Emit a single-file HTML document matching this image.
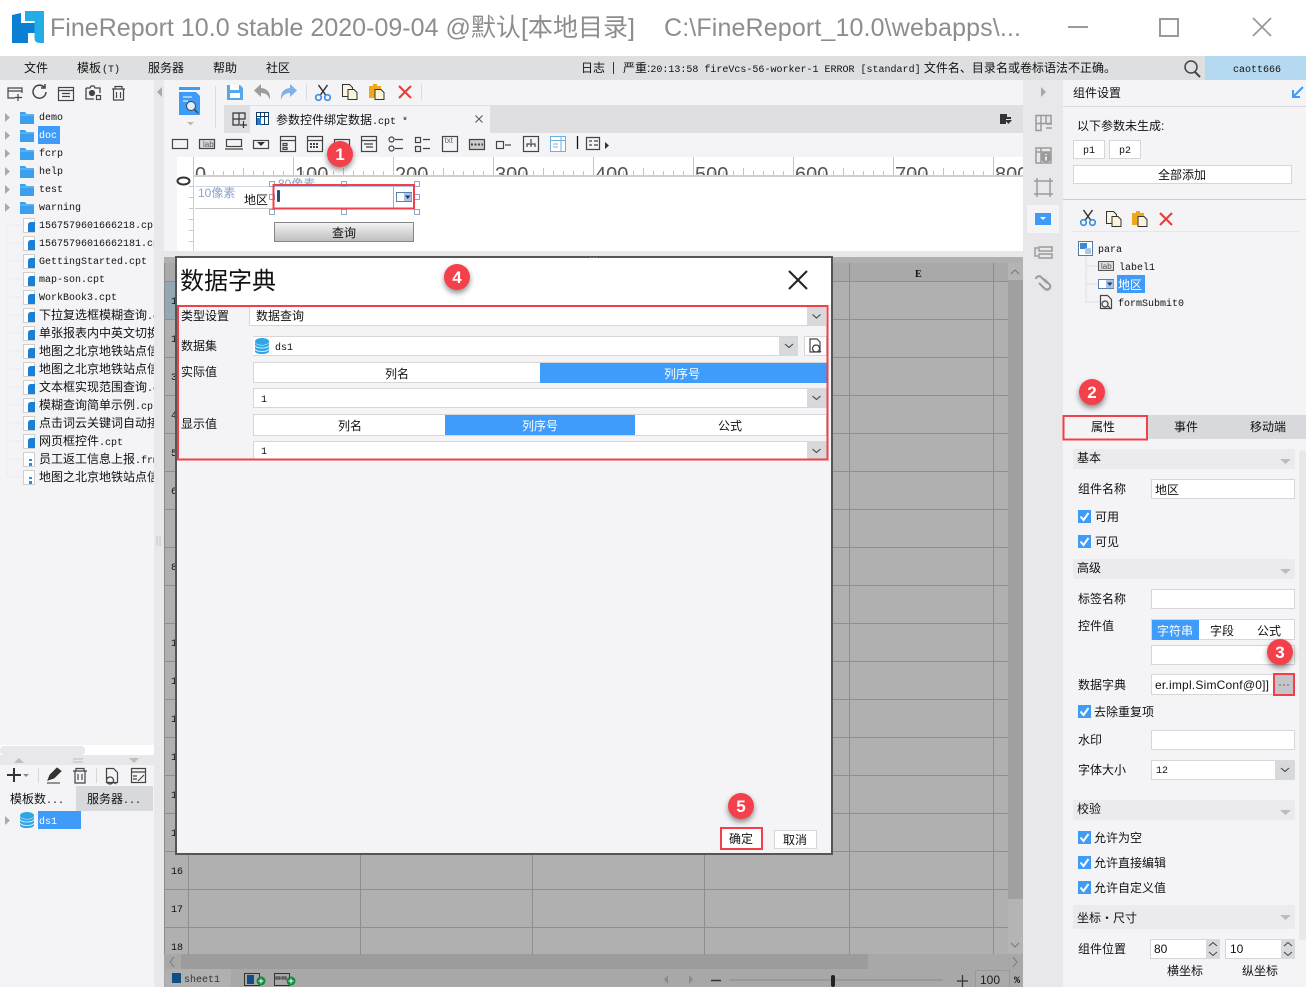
<!DOCTYPE html>
<html lang="zh"><head><meta charset="utf-8"><title>FineReport</title>
<style>
html,body{margin:0;padding:0;background:#f4f4f7;overflow:hidden}
svg{display:block}
text{font-family:"Liberation Sans","Noto Sans CJK SC",sans-serif;font-size:12px;fill:#111}
.m,.m text{font-family:"Liberation Mono","Noto Sans CJK SC",monospace;font-size:10px}
.w{fill:#fff}
.mid{text-anchor:middle}
.b{font-weight:bold;font-size:17px;fill:#fff;text-anchor:middle}
.ttl{font-size:25px;fill:#8d8d8d}
.rl{font-size:20px;fill:#555}
.fd{fill:#fff;stroke:#d6d6d8;stroke-width:1}
.ln{fill:none;stroke:#444;stroke-width:1.2}
.gy{fill:none;stroke:#9a9a9a;stroke-width:1.5}
.red{fill:none;stroke:#f2404a;stroke-width:2}
</style></head><body>
<svg width="1306" height="987" viewBox="0 0 1306 987" xmlns="http://www.w3.org/2000/svg">
<defs>
<clipPath id="cl"><rect x="0" y="108" width="154" height="640"/></clipPath>
<clipPath id="cr"><rect x="164" y="157" width="859" height="18"/></clipPath>
<pattern id="tk" width="10" height="18" x="193" y="157" patternUnits="userSpaceOnUse"><rect x="0" y="14" width="1" height="4" fill="#c4c4c4"/></pattern>
<g id="fo"><path d="M0 1h5l1.500 2H14v10H0z" fill="#3a9fee"/><path d="M0 4h14" stroke="#8cc8f6" stroke-width=".8"/></g>
<g id="fi"><path d="M.5 .5h11v14H.5z" fill="#fff" stroke="#cfcfcf"/><path d="M5 14V7q0-3 3-3h4v10z" fill="#1a7fd6"/></g>
<g id="fj"><path d="M.5 .5h11v14H.5z" fill="#fff" stroke="#cfcfcf"/><path d="M6 7h3v2H6zM6 11h3v3H6z" fill="#2a8ddd"/></g>
<g id="db"><ellipse cx="7" cy="3.500" rx="7" ry="3.500" fill="#2fa5e6"/><path d="M0 4v9c0 2 3 3 7 3s7-1 7-3V4c0 2-3 3.500-7 3.500S0 6 0 4z" fill="#2fa5e6"/><path d="M0 7.500c1 2 4 2.500 7 2.500s6-.5 7-2.500M0 11c1 2 4 2.500 7 2.500s6-.5 7-2.500" fill="none" stroke="#cfeafa"/></g>
<g id="cut"><path d="M3.500 0l7.500 10.500M12.500 0L5 10.500" stroke="#333" stroke-width="1.500" fill="none"/><circle cx="3.500" cy="12.500" r="2.800" fill="none" stroke="#3a8fe0" stroke-width="1.700"/><circle cx="12.500" cy="12.500" r="2.800" fill="none" stroke="#3a8fe0" stroke-width="1.700"/></g>
<g id="cp"><path d="M.5 .5h7l3 3v9H.5z" fill="#fbf6e4" stroke="#333"/><path d="M6 5.500h6l3 3v7H6z" fill="#fbf3dc" stroke="#333"/></g>
<g id="pa"><path d="M0 2h4V0h4v2h4v12H0z" fill="#f0a818"/><path d="M6 5.500h6l3 3v7H6z" fill="#fbf3dc" stroke="#333"/></g>
<path id="rx" d="M1 1l12 12M13 1L1 13" stroke="#e8413a" stroke-width="2.200" fill="none"/>
<g id="ck"><rect width="13" height="13" fill="#3f9bf8"/><path d="M2.500 6.500l3 3.500 5-7" fill="none" stroke="#fff" stroke-width="2"/></g>
<path id="chev" d="M0 0l4 3.500L8 0" fill="none" stroke="#444" stroke-width="1.100"/>
<g id="dd"><rect width="19" height="19" fill="#d8d9dc"/><use href="#chev" x="5.500" y="8"/></g>
<path id="sec" d="M0 0h11l-5.500 5z" fill="#bdbdbd"/>
<path id="ar" d="M0 0l5 4.500L0 9z" fill="#a9a9ab"/>
<g id="cb"><rect x=".5" y=".5" width="15" height="9" fill="#fff" stroke="#5d7fb0"/><rect x="8" y="1" width="7.500" height="8" fill="#a9c4e6"/><path d="M9 3.500h5.500L11.700 7z" fill="#1d3b66"/></g>
</defs>

<!-- title bar -->
<rect width="1306" height="56" fill="#fff"/>
<g>
<path d="M12 15l9-2v30h-9z" fill="#0b7fd4"/>
<path d="M21 23h13.500v10H28v10h-7z" fill="#0b7fd4"/>
<path d="M25 11h19v32h-4q-5.500 0-5.500-5V21H25z" fill="#22ade6"/>
</g>
<text class="ttl" x="50" y="36" textLength="585">FineReport 10.0 stable 2020-09-04 @默认[本地目录]</text>
<text class="ttl" x="664" y="36" textLength="357">C:\FineReport_10.0\webapps\...</text>
<path d="M1068 27h20" stroke="#9a9a9a" stroke-width="2"/>
<rect x="1160" y="19" width="18" height="17" fill="none" stroke="#9a9a9a" stroke-width="2"/>
<path d="M1253 18l18 18M1271 18l-18 18" stroke="#9a9a9a" stroke-width="1.800"/>

<!-- menu -->
<rect y="56" width="1306" height="24" fill="#dedfe1"/>
<text x="24" y="72">文件</text>
<text x="77" y="72">模板<tspan class="m" dx="1">(T)</tspan></text>
<text x="148" y="72">服务器</text>
<text x="213" y="72">帮助</text>
<text x="266" y="72">社区</text>
<text x="581" y="72">日志</text>
<path d="M613.500 62v12" stroke="#333"/>
<text x="623" y="72" textLength="493">严重:<tspan class="m">20:13:58 fireVcs-56-worker-1 ERROR [standard]</tspan> 文件名、目录名或卷标语法不正确。</text>
<circle cx="1191" cy="67" r="6" fill="none" stroke="#444" stroke-width="1.500"/><path d="M1195 72l5 5" stroke="#444" stroke-width="2"/>
<rect x="1205" y="56" width="101" height="24" fill="#b5d9f0"/>
<text class="m mid" x="1257" y="72">caott666</text>

<!-- main backgrounds -->
<rect y="80" width="154" height="907" fill="#f4f4f7"/>
<rect x="154" y="80" width="10" height="907" fill="#e8e8ea"/>
<rect x="164" y="80" width="859" height="177" fill="#f4f4f7"/>
<rect x="1023" y="80" width="40" height="907" fill="#e8e8ea"/>
<rect x="1063" y="80" width="243" height="907" fill="#f4f4f7"/>

<!-- left toolbar -->
<g class="ln">
<path d="M15 98H8V88h14v5M8 91h14M18 94v7M15 97.500h7"/>
<path d="M46 92a6.500 6.500 0 1 1-2-5M45 84v4h-4" stroke-width="1.500"/>
<rect x="58.500" y="87.500" width="15" height="13"/><path d="M58 90.500h16M62 93.500h8M62 96.500h8"/>
<path d="M86 88h4l1-2h3l1 2h5v5M86 88v11h8" stroke-width="1.300"/><circle cx="92" cy="93" r="2.500" fill="#444"/><rect x="96.500" y="95.500" width="4" height="4"/>
<path d="M112 89h13M115 89v-2.500h7V89M113.500 89v11h10V89M116.500 92v6M120.500 92v6"/>
</g>
<path d="M162 87v10l-5-5z" fill="#aaa"/>
<path d="M157 536v10M160 536v10" stroke="#c4c4c4"/>

<!-- tree -->
<g clip-path="url(#cl)">
<rect x="38" y="126" width="22" height="18" fill="#3f9bf8"/>
<path d="M7 225v252M9 225h12M9 243h12M9 261h12M9 279h12M9 297h12M9 315h12M9 333h12M9 351h12M9 369h12M9 387h12M9 405h12M9 423h12M9 441h12M9 459h12M9 477h12" stroke="#ececee" fill="none"/>
<use href="#ar" x="5" y="113"/><use href="#ar" x="5" y="131"/><use href="#ar" x="5" y="149"/><use href="#ar" x="5" y="167"/><use href="#ar" x="5" y="185"/><use href="#ar" x="5" y="203"/>
<use href="#fo" x="20" y="111"/><use href="#fo" x="20" y="129"/><use href="#fo" x="20" y="147"/><use href="#fo" x="20" y="165"/><use href="#fo" x="20" y="183"/><use href="#fo" x="20" y="201"/>
<use href="#fi" x="23" y="218"/><use href="#fi" x="23" y="236"/><use href="#fi" x="23" y="254"/><use href="#fi" x="23" y="272"/><use href="#fi" x="23" y="290"/><use href="#fi" x="23" y="308"/><use href="#fi" x="23" y="326"/><use href="#fi" x="23" y="344"/><use href="#fi" x="23" y="362"/><use href="#fi" x="23" y="380"/><use href="#fi" x="23" y="398"/><use href="#fi" x="23" y="416"/><use href="#fi" x="23" y="434"/><use href="#fj" x="23" y="452"/><use href="#fj" x="23" y="470"/>
<g class="m">
<text x="39" y="120">demo</text><text x="39" y="138" class="w">doc</text><text x="39" y="156">fcrp</text><text x="39" y="174">help</text><text x="39" y="192">test</text><text x="39" y="210">warning</text>
<text x="39" y="228">1567579601666218.cpt</text><text x="39" y="246">15675796016662181.cpt</text><text x="39" y="264">GettingStarted.cpt</text><text x="39" y="282">map-son.cpt</text><text x="39" y="300">WorkBook3.cpt</text>
</g>
<text x="39" y="319">下拉复选框模糊查询<tspan class="m">.cpt</tspan></text>
<text x="39" y="337">单张报表内中英文切换</text>
<text x="39" y="355">地图之北京地铁站点信息</text>
<text x="39" y="373">地图之北京地铁站点信息</text>
<text x="39" y="391">文本框实现范围查询<tspan class="m">.cpt</tspan></text>
<text x="39" y="409">模糊查询简单示例<tspan class="m">.cpt</tspan></text>
<text x="39" y="427">点击词云关键词自动接</text>
<text x="39" y="445">网页框控件<tspan class="m">.cpt</tspan></text>
<text x="39" y="463">员工返工信息上报<tspan class="m">.frm</tspan></text>
<text x="39" y="481">地图之北京地铁站点信息</text>
</g>

<!-- left bottom -->
<rect y="745" width="154" height="10" fill="#fff"/><rect y="746" width="85" height="9" rx="4" fill="#e8e8ea"/>
<rect y="755" width="154" height="10" fill="#e8e8ea"/>
<path d="M14 763l5-5 5 5zM129 758h10l-5 5z" fill="#bdbdbd"/><path d="M73 759h10M73 762h10" stroke="#bdbdbd"/>
<path d="M7 775h14M14 768v14" stroke="#333" stroke-width="2"/><path d="M23 774h6l-3 3z" fill="#888"/>
<path d="M38.500 768v15M96.500 768v15" stroke="#d8d8d8"/>
<path d="M48 780l2-5 7-7 4 3-7 7zM47 783h13" fill="#333" stroke="#333"/>
<path class="ln" d="M73 771h14M76 771v-2.500h8V771M75 771v12h10v-12M78 774v6M82 774v6"/>
<path class="ln" d="M106.500 768.500h7l4 4v10h-11zM110 777a3.500 3.500 0 1 0 .1 0M113 782l3 2"/>
<path class="ln" d="M131.500 768.500h14v14h-14zM131 772h15M133 776h4M133 779h4M138 781l6-6"/>
<rect y="786" width="76" height="25" fill="#f4f4f7"/><rect x="76" y="786" width="77" height="25" fill="#d8d9dc"/>
<text x="10" y="803">模板数<tspan class="m">...</tspan></text>
<text x="87" y="803">服务器<tspan class="m">...</tspan></text>
<use href="#ar" x="5" y="816"/>
<use href="#db" x="20" y="812"/>
<rect x="38" y="811" width="43" height="18" fill="#3f9bf8"/>
<text class="m w" x="39" y="824">ds1</text>

<!-- center toolbar -->
<path d="M179 87h21v3h-21z" fill="#3f9bf8"/><path d="M179 92h17l4 4v19h-21z" fill="#3f9bf8"/>
<path d="M183 97h9M183 101h5" stroke="#fff" fill="none"/><circle cx="191" cy="106" r="4.500" fill="#dff0fc" stroke="#444"/><path d="M194 109l4 4" stroke="#444" stroke-width="1.500"/>
<path d="M187 122h7l-3.500 3.500z" fill="#bbb"/>
<path d="M215.500 86v42" stroke="#dcdcdc"/>
<path d="M227 85h13l3 3v12h-16z" fill="#5aa6ea"/><rect x="230" y="85" width="9" height="5" fill="#fff"/><rect x="230" y="93" width="10" height="5" fill="#fff"/>
<path d="M270 100q-2-7-9-7v4l-7-6.500 7-6.500v4q10 1 9 12z" fill="#9c9c9c"/>
<path d="M281 100q2-7 9-7v4l7-6.500-7-6.500v4q-10 1-9 12z" fill="#7fb2e8"/>
<path d="M306.500 84v16" stroke="#dcdcdc"/>
<use href="#cut" x="315" y="85"/><use href="#cp" x="342" y="84"/><use href="#pa" x="369" y="84"/><use href="#rx" x="398" y="85"/>
<path d="M421.500 84v16" stroke="#dcdcdc"/>

<!-- tab bar -->
<rect x="224" y="105" width="799" height="28" fill="#dfdfe1"/>
<rect x="250" y="106" width="240" height="27" fill="#f4f4f7"/>
<path d="M233 113h12v6h-12zM233 119v6h6v-6M239 113v6M240 125h7M243.500 121v7" fill="none" stroke="#333" stroke-width="1.200"/>
<rect x="256.500" y="112.500" width="12" height="12" fill="#fff" stroke="#123d66"/><path d="M256 116.500h13M260.500 112v12M264.500 112v12" stroke="#123d66"/><rect x="257" y="118" width="4" height="7" fill="#1a7fd6"/>
<text x="276" y="124">参数控件绑定数据<tspan class="m">.cpt *</tspan></text>
<path d="M475.500 115.500l7 7M482.500 115.500l-7 7" stroke="#555"/>
<path d="M1000 114h7v3h4v2h-5v5h-6z" fill="#333"/><path d="M1005 120h7l-3.500 4z" fill="#333"/>

<!-- widget toolbar -->
<g class="ln" stroke="#333">
<rect x="172.500" y="139.500" width="15" height="9"/>
<rect x="199.500" y="139.500" width="15" height="9" fill="#ddd"/>
<rect x="226.500" y="139.500" width="15" height="7"/><path d="M225 149h18"/>
<rect x="253.500" y="140.500" width="15" height="8"/>
<rect x="280.500" y="136.500" width="15" height="15"/><path d="M280 140.500h16M283 143.500h4v2h-4zM283 147.500h4v2h-4z"/>
<rect x="307.500" y="136.500" width="15" height="15"/><path d="M307 140.500h16"/><path d="M310 144h9M310 147h9" stroke-dasharray="2 1" stroke-width="2"/>
<rect x="334.500" y="139.500" width="15" height="11"/>
<rect x="361.500" y="136.500" width="15" height="15"/><path d="M361 140.500h16M364 144h9M366 147h7"/>
<circle cx="391.500" cy="139.500" r="2.500"/><circle cx="391.500" cy="148.500" r="2.500"/><path d="M395 139.500h8M395 148.500h8"/>
<rect x="415.500" y="137.500" width="5" height="5"/><rect x="415.500" y="146.500" width="5" height="5"/><path d="M423 139.500h7M423 148.500h7"/>
<rect x="442.500" y="136.500" width="15" height="15"/>
<rect x="469.500" y="139.500" width="15" height="10" fill="#ccc"/><path d="M471 144.500h12" stroke-dasharray="2 1.500" stroke-width="2"/>
<rect x="496.500" y="141.500" width="7" height="7"/><path d="M505 145h6"/>
<rect x="523.500" y="136.500" width="15" height="15"/><path d="M531 139v4M527 147v-3h8v3M531 144v3"/>
<path d="M586.500 137.500h13v12h-13zM589 141h3M589 145h3M594 141h4M594 145h4"/>
</g>
<path d="M257 142h8l-4 4z" fill="#333"/>
<text x="203" y="147" style="font-size:8px;fill:#555">lab</text>
<text x="444.500" y="143" style="font-size:8px;fill:#666">txt</text>
<rect x="550.500" y="136.500" width="15" height="15" fill="#fff" stroke="#6fb0de"/><path d="M550 140.500h16M561 137v14M553 144h5M553 147h5" stroke="#6fb0de"/>
<path d="M577.500 136v13" stroke="#111" stroke-width="1.300"/>
<path d="M605 142l4 3.500-4 3.500z" fill="#333"/>

<!-- ruler -->
<rect x="177" y="157" width="846" height="94" fill="#fff"/>
<rect x="193" y="157" width="830" height="18" fill="url(#tk)"/>
<path d="M193.500 157v19M293.500 157v19M393.500 157v19M493.500 157v19M593.500 157v19M693.500 157v19M793.500 157v19M893.500 157v19M993.500 157v19M243.500 168v7M343.500 168v7M443.500 168v7M543.500 168v7M643.500 168v7M743.500 168v7M843.500 168v7M943.500 168v7" stroke="#c4c4c4" fill="none"/>
<g clip-path="url(#cr)">
<text class="rl" x="195" y="181">0</text><text class="rl" x="295" y="181">100</text><text class="rl" x="395" y="181">200</text><text class="rl" x="495" y="181">300</text><text class="rl" x="595" y="181">400</text><text class="rl" x="695" y="181">500</text><text class="rl" x="795" y="181">600</text><text class="rl" x="895" y="181">700</text><text class="rl" x="995" y="181">800</text>
</g>
<rect x="193" y="175" width="830" height="2" fill="#d0d0d0"/>
<path d="M193.500 177v74" stroke="#d0d0d0"/>
<path d="M189 186.500h4M189 197.500h4M189 208.500h4M189 219.500h4M189 230.500h4M189 241.500h4" stroke="#c8c8c8"/>
<ellipse cx="183.500" cy="181" rx="6" ry="3.500" fill="none" stroke="#333" stroke-width="2"/>

<!-- param panel -->
<path d="M195 186.500h77" stroke="#d0d8e4"/><path d="M195 208.500h80" stroke="#c8c8c8"/>
<text x="198" y="197" style="fill:#8ba4c4">10像素</text>
<text x="278" y="188" style="fill:#8ba4c4">80像素</text>
<text x="244" y="204">地区</text>
<rect x="274" y="186" width="120" height="23" fill="#fff"/>
<path d="M393.500 186v23" stroke="#aaa"/>
<path d="M274 186.500h140" stroke="#a8c2e0"/>
<rect x="277" y="190" width="3" height="12" rx="1" fill="#1d4f80"/>
<use href="#cb" x="396" y="192"/>
<g fill="#fff" stroke="#8aa8c8">
<rect x="269.500" y="181.500" width="5" height="5"/><rect x="341.500" y="181.500" width="5" height="5"/><rect x="414.500" y="181.500" width="5" height="5"/><rect x="269.500" y="194.500" width="5" height="5"/><rect x="414.500" y="194.500" width="5" height="5"/><rect x="269.500" y="209.500" width="5" height="5"/><rect x="341.500" y="209.500" width="5" height="5"/><rect x="414.500" y="209.500" width="5" height="5"/>
</g>
<rect x="273.500" y="185" width="140.500" height="23.500" class="red"/>
<defs><linearGradient id="bg" x1="0" y1="0" x2="0" y2="1"><stop offset="0" stop-color="#f4f4f4"/><stop offset="1" stop-color="#bdbdbd"/></linearGradient></defs>
<rect x="274.500" y="222.500" width="139" height="19" fill="url(#bg)" stroke="#888"/>
<text class="mid" x="344" y="237">查询</text>

<!-- sheet -->
<rect x="164" y="251" width="859" height="6" fill="#e8e8ea"/>
<rect x="164" y="257" width="859" height="712" fill="#b0b0b0"/>
<rect x="164" y="263" width="844" height="18" fill="#a9a9a9"/>
<rect x="165" y="282" width="23" height="37" fill="#93a8b3"/>
<path d="M188.500 263v691M360.500 263v691M532.500 263v691M704.500 263v691M849.500 263v691M993.500 263v691" stroke="#8e8e8e"/>
<path d="M164 281.500h844M164 319.500h844M164 357.500h844M164 395.500h844M164 433.500h844M164 471.500h844M164 509.500h844M164 547.500h844M164 585.500h844M164 623.500h844M164 661.500h844M164 699.500h844M164 737.500h844M164 775.500h844M164 813.500h844M164 851.500h844M164 889.500h844M164 927.500h844" stroke="#8e8e8e"/>
<rect x="164" y="263" width="1" height="700" fill="#8a8a8a"/>
<text x="915" y="277" style="font-family:'Liberation Serif';font-size:10px;font-weight:bold">E</text>
<g class="m">
<text x="171" y="304">1</text><text x="171" y="342">1</text><text x="171" y="380">3</text><text x="171" y="418">4</text><text x="171" y="456">5</text><text x="171" y="494">6</text><text x="171" y="570">8</text><text x="171" y="646">1</text><text x="171" y="684">1</text><text x="171" y="722">1</text><text x="171" y="760">1</text><text x="171" y="798">1</text><text x="171" y="836">1</text>
<text x="171" y="874">16</text><text x="171" y="912">17</text><text x="171" y="950">18</text>
</g>
<!-- v scrollbar -->
<rect x="1008" y="263" width="15" height="691" fill="#b4b4b4"/><rect x="1008" y="280" width="15" height="619" fill="#a0a0a0"/>
<path d="M1011 274l4-4 4 4M1011 943l4 4 4-4" fill="none" stroke="#777"/>
<!-- h scrollbar -->
<rect x="164" y="954" width="859" height="15" fill="#a8a8a8"/><rect x="181" y="954" width="687" height="15" fill="#9c9c9c"/>
<path d="M174 957l-4 5 4 5M1013 957l4 5-4 5" fill="none" stroke="#777"/>
<!-- sheet tabs -->
<rect x="164" y="969" width="859" height="18" fill="#a8a8a8"/><rect x="165" y="969" width="66" height="18" fill="#b0b0b0"/>
<rect x="172" y="973" width="9" height="10" fill="#0f4f85"/>
<text class="m" x="184" y="982" style="fill:#333">sheet1</text>
<rect x="244.500" y="973.500" width="15" height="12" fill="none" stroke="#333"/><rect x="247" y="975" width="7" height="9" fill="#0f4f85"/><circle cx="261" cy="981" r="4.500" fill="#0f8a3c"/><path d="M258.500 981h5M261 978.500v5" stroke="#fff"/>
<rect x="274.500" y="973.500" width="15" height="12" fill="none" stroke="#333"/><path d="M276 977h4v2h-4zM282 977h4v2h-4z" fill="none" stroke="#333"/><circle cx="291" cy="981" r="4.500" fill="#0f8a3c"/><path d="M288.500 981h5M291 978.500v5" stroke="#fff"/>
<path d="M668 975v9l-4-4.500zM689 975v9l4-4.500z" fill="#8a8a8a"/>
<path d="M711 980.500h10" stroke="#333" stroke-width="1.500"/>
<path d="M729 980h214" stroke="#8a8a8a"/><rect x="831" y="975" width="4" height="12" rx="2" fill="#222"/>
<path d="M957 981h11M962.500 975v12" stroke="#333" stroke-width="1.200"/>
<rect x="975.500" y="970.500" width="34" height="17" fill="#aaa" stroke="#999"/>
<text class="mid" x="990" y="984" style="font-size:12px;fill:#222">100</text>
<text class="m" x="1014" y="983" style="font-weight:bold">%</text>

<!-- dialog -->
<rect x="176" y="257" width="656" height="597" fill="#f4f4f7" stroke="#555" stroke-width="2"/>
<rect x="177" y="258" width="654" height="47" fill="#fff"/>
<text x="180" y="289" style="font-size:24px">数据字典</text>
<path d="M789 271l18 18M807 271l-18 18" stroke="#222" stroke-width="2"/>
<path d="M590 257.500h1M593 257.500h1M596 257.500h1" stroke="#999"/>

<text x="181" y="320">类型设置</text>
<path d="M249 307h578v18H249z" fill="#fff"/><path d="M249.500 307v18.500H827" fill="none" stroke="#d6d6d8"/>
<text x="256" y="320">数据查询</text>
<use href="#dd" x="807" y="307" transform="translate(0 -.5)"/>

<text x="181" y="350">数据集</text>
<path d="M253 336h545v20H253z" fill="#fff"/><path d="M253 336.500h545M253 355.500h545" stroke="#d6d6d8"/>
<use href="#db" x="255" y="338"/>
<text class="m" x="275" y="350">ds1</text>
<rect x="779" y="337" width="19" height="19" fill="#d8d9dc"/><use href="#chev" x="785" y="344"/>
<rect x="804.500" y="336.500" width="22" height="19" class="fd"/>
<path class="ln" d="M810 339h7l3 3v10h-10zM816 345a3.500 3.500 0 1 0 .1 0M819 350l2 2" stroke="#222"/>

<text x="181" y="376">实际值</text>
<rect x="253.500" y="362.500" width="573" height="20" class="fd"/>
<rect x="540" y="363" width="287" height="20" fill="#409cfa"/>
<text class="mid" x="397" y="378">列名</text><text class="mid w" x="682" y="378">列序号</text>
<rect x="253.500" y="388.500" width="573" height="19" class="fd"/>
<text class="m" x="261" y="402">1</text>
<use href="#dd" x="807" y="388"/>

<text x="181" y="428">显示值</text>
<rect x="253.500" y="414.500" width="573" height="21" class="fd"/>
<rect x="445" y="415" width="190" height="20" fill="#409cfa"/>
<text class="mid" x="350" y="430">列名</text><text class="mid w" x="540" y="430">列序号</text><text class="mid" x="730" y="430">公式</text>
<rect x="253.500" y="441.500" width="573" height="18" class="fd"/>
<text class="m" x="261" y="454">1</text>
<use href="#dd" x="807" y="441"/>
<rect x="178" y="306" width="649.500" height="153.500" class="red"/>

<rect x="721" y="828" width="41" height="21" fill="#fff"/>
<rect x="721" y="828" width="41" height="21" class="red"/>
<text class="mid" x="741" y="843">确定</text>
<rect x="774.500" y="830.500" width="42" height="18" class="fd"/>
<text class="mid" x="795" y="844">取消</text>

<!-- right strip -->
<path d="M1041 87l5 5-5 5z" fill="#a9a9ab"/>
<g class="gy">
<path d="M1036 115.500h15v8h-15zM1036 123.500v7h5v-7M1041 115.500v8M1046 115.500v8M1046 124h6M1046 128h6"/>
<path d="M1036 148h15v15h-15zM1036 152h15M1041 148v15"/>
<path d="M1037 181h13v13h-13zM1037 178v19M1050 178v19M1034 181h19M1034 194h19"/>
<path d="M1039 247h13v4h-13zM1039 254h13v4h-13zM1038 248h-3v8h3"/>
<path d="M1036 279a3 3 0 0 1 5-2l6 6M1050 287a3 3 0 0 1-5 2l-6-6M1044 279l6 6a3 3 0 0 1-4 4" stroke-width="2"/>
</g>
<circle cx="1046" cy="157" r="5.500" fill="#9a9a9a"/><path d="M1046 154v1M1046 156.500v4" stroke="#fff" stroke-width="1.500"/>
<rect x="1027" y="205" width="32" height="28" fill="#f4f4f7"/>
<rect x="1035" y="213" width="16" height="12" fill="#3f9bf8"/><path d="M1040 217h6l-3 3z" fill="#fff"/>

<!-- right panel -->
<text x="1073" y="97">组件设置</text>
<path d="M1303 87l-9 9M1293 90v7h7" fill="none" stroke="#3f9bf8" stroke-width="2"/>
<rect x="1063" y="106" width="243" height="1" fill="#d8d8d8"/>
<text x="1077" y="130">以下参数未生成:</text>
<rect x="1073.500" y="140.500" width="31" height="18" class="fd"/><text class="m mid" x="1089" y="153">p1</text>
<rect x="1109.500" y="140.500" width="31" height="18" class="fd"/><text class="m mid" x="1125" y="153">p2</text>
<rect x="1073.500" y="165.500" width="218" height="18" class="fd"/><text class="mid" x="1182" y="179">全部添加</text>
<rect x="1063" y="199" width="243" height="1" fill="#cfcfc9"/>
<use href="#cut" x="1080" y="210"/><use href="#cp" x="1106" y="211"/><use href="#pa" x="1132" y="211"/><use href="#rx" x="1159" y="212"/>
<rect x="1073" y="231" width="226" height="1" fill="#e6e6e8"/>
<path d="M1086 256v47M1086 266h12M1086 284h12M1086 302h14" stroke="#e0e0e2" fill="none"/>
<rect x="1078.500" y="241.500" width="14" height="14" fill="#fff" stroke="#5b7a9a"/><rect x="1080" y="243" width="7" height="6" fill="#3a8ad0"/><rect x="1085" y="248" width="6" height="6" fill="#a8c8ee"/>
<text class="m" x="1098" y="252">para</text>
<rect x="1098.500" y="261.500" width="15" height="9" fill="#ddd" stroke="#555"/><text x="1101" y="269" style="font-size:8px;fill:#555">lab</text>
<text class="m" x="1119" y="270">label1</text>
<use href="#cb" x="1098" y="279"/>
<rect x="1117" y="275" width="28" height="18" fill="#3f9bf8"/>
<text class="w" x="1118" y="289">地区</text>
<path class="ln" d="M1100.500 295.500h7l4 4v9h-11zM1105 301a3 3 0 1 0 .1 0M1108 306l2 2" stroke="#222"/>
<text class="m" x="1118" y="306">formSubmit0</text>

<rect x="1147" y="415" width="159" height="24" fill="#d8d9dc"/>
<text class="mid" x="1103" y="431">属性</text><text class="mid" x="1186" y="431">事件</text><text class="mid" x="1268" y="431">移动端</text>
<rect x="1063.500" y="416" width="83.500" height="23.500" class="red"/>

<rect x="1299" y="450" width="7" height="490" rx="3" fill="#e8e8ea"/>

<g fill="#ebebed">
<rect x="1073" y="449" width="222" height="20"/><rect x="1073" y="559" width="222" height="20"/><rect x="1073" y="800" width="222" height="20"/><rect x="1073" y="905" width="222" height="24"/>
</g>
<use href="#sec" x="1280" y="459"/><use href="#sec" x="1280" y="569"/><use href="#sec" x="1280" y="810"/><use href="#sec" x="1280" y="915"/>
<text x="1077" y="462">基本</text><text x="1077" y="572">高级</text><text x="1077" y="813">校验</text><text x="1077" y="922">坐标・尺寸</text>

<text x="1078" y="493">组件名称</text>
<rect x="1151.500" y="479.500" width="143" height="19" class="fd"/><text x="1155" y="494">地区</text>
<use href="#ck" x="1078" y="510"/><text x="1095" y="521">可用</text>
<use href="#ck" x="1078" y="535"/><text x="1095" y="546">可见</text>

<text x="1078" y="603">标签名称</text>
<rect x="1151.500" y="589.500" width="143" height="19" class="fd"/>
<text x="1078" y="630">控件值</text>
<rect x="1151.500" y="619.500" width="143" height="20" class="fd"/>
<rect x="1152" y="620" width="47" height="20" fill="#409cfa"/>
<text class="mid w" x="1175" y="635">字符串</text><text class="mid" x="1222" y="635">字段</text><text class="mid" x="1269" y="635">公式</text>
<rect x="1151.500" y="645.500" width="143" height="19" class="fd"/>

<text x="1078" y="689">数据字典</text>
<rect x="1151.500" y="674.500" width="143" height="20" class="fd"/>
<text x="1155" y="689" textLength="114">er.impl.SimConf@0]]</text>
<rect x="1274" y="674" width="20" height="21" fill="#c4c5c8"/>
<rect x="1274" y="674" width="20" height="21" class="red"/>
<path d="M1279 685h2M1283 685h2M1287 685h2" stroke="#666"/>

<use href="#ck" x="1078" y="705"/><text x="1094" y="716">去除重复项</text>
<text x="1078" y="744">水印</text>
<rect x="1151.500" y="730.500" width="143" height="19" class="fd"/>
<text x="1078" y="774">字体大小</text>
<rect x="1151.500" y="760.500" width="143" height="19" class="fd"/>
<text class="m" x="1156" y="773">12</text>
<rect x="1275" y="760" width="20" height="20" fill="#d8d9dc"/><use href="#chev" x="1281" y="768"/>

<use href="#ck" x="1078" y="831"/><text x="1094" y="842">允许为空</text>
<use href="#ck" x="1078" y="856"/><text x="1094" y="867">允许直接编辑</text>
<use href="#ck" x="1078" y="881"/><text x="1094" y="892">允许自定义值</text>

<text x="1078" y="953">组件位置</text>
<rect x="1150.500" y="939.500" width="69" height="19" class="fd"/><rect x="1206" y="939" width="14" height="20" fill="#d8d9dc"/>
<path d="M1209 946l4-3.500 4 3.500M1209 952l4 3.500 4-3.500" fill="none" stroke="#444"/>
<rect x="1225.500" y="939.500" width="69" height="19" class="fd"/><rect x="1281" y="939" width="14" height="20" fill="#d8d9dc"/>
<path d="M1284 946l4-3.500 4 3.500M1284 952l4 3.500 4-3.500" fill="none" stroke="#444"/>
<text x="1154" y="953">80</text><text x="1230" y="953">10</text>
<text class="mid" x="1185" y="975">横坐标</text><text class="mid" x="1260" y="975">纵坐标</text>

<!-- badges -->
<g style="filter:drop-shadow(0 3px 3px rgba(0,0,0,.45))" fill="#f4404a">
<circle cx="340" cy="154" r="13"/><circle cx="1092" cy="392" r="13"/><circle cx="1280" cy="652" r="13"/><circle cx="457" cy="277" r="13"/><circle cx="741" cy="806" r="13"/>
</g>
<text class="b" x="340" y="160">1</text><text class="b" x="1092" y="398">2</text><text class="b" x="1280" y="658">3</text><text class="b" x="457" y="283">4</text><text class="b" x="741" y="812">5</text>
</svg>
</body></html>
